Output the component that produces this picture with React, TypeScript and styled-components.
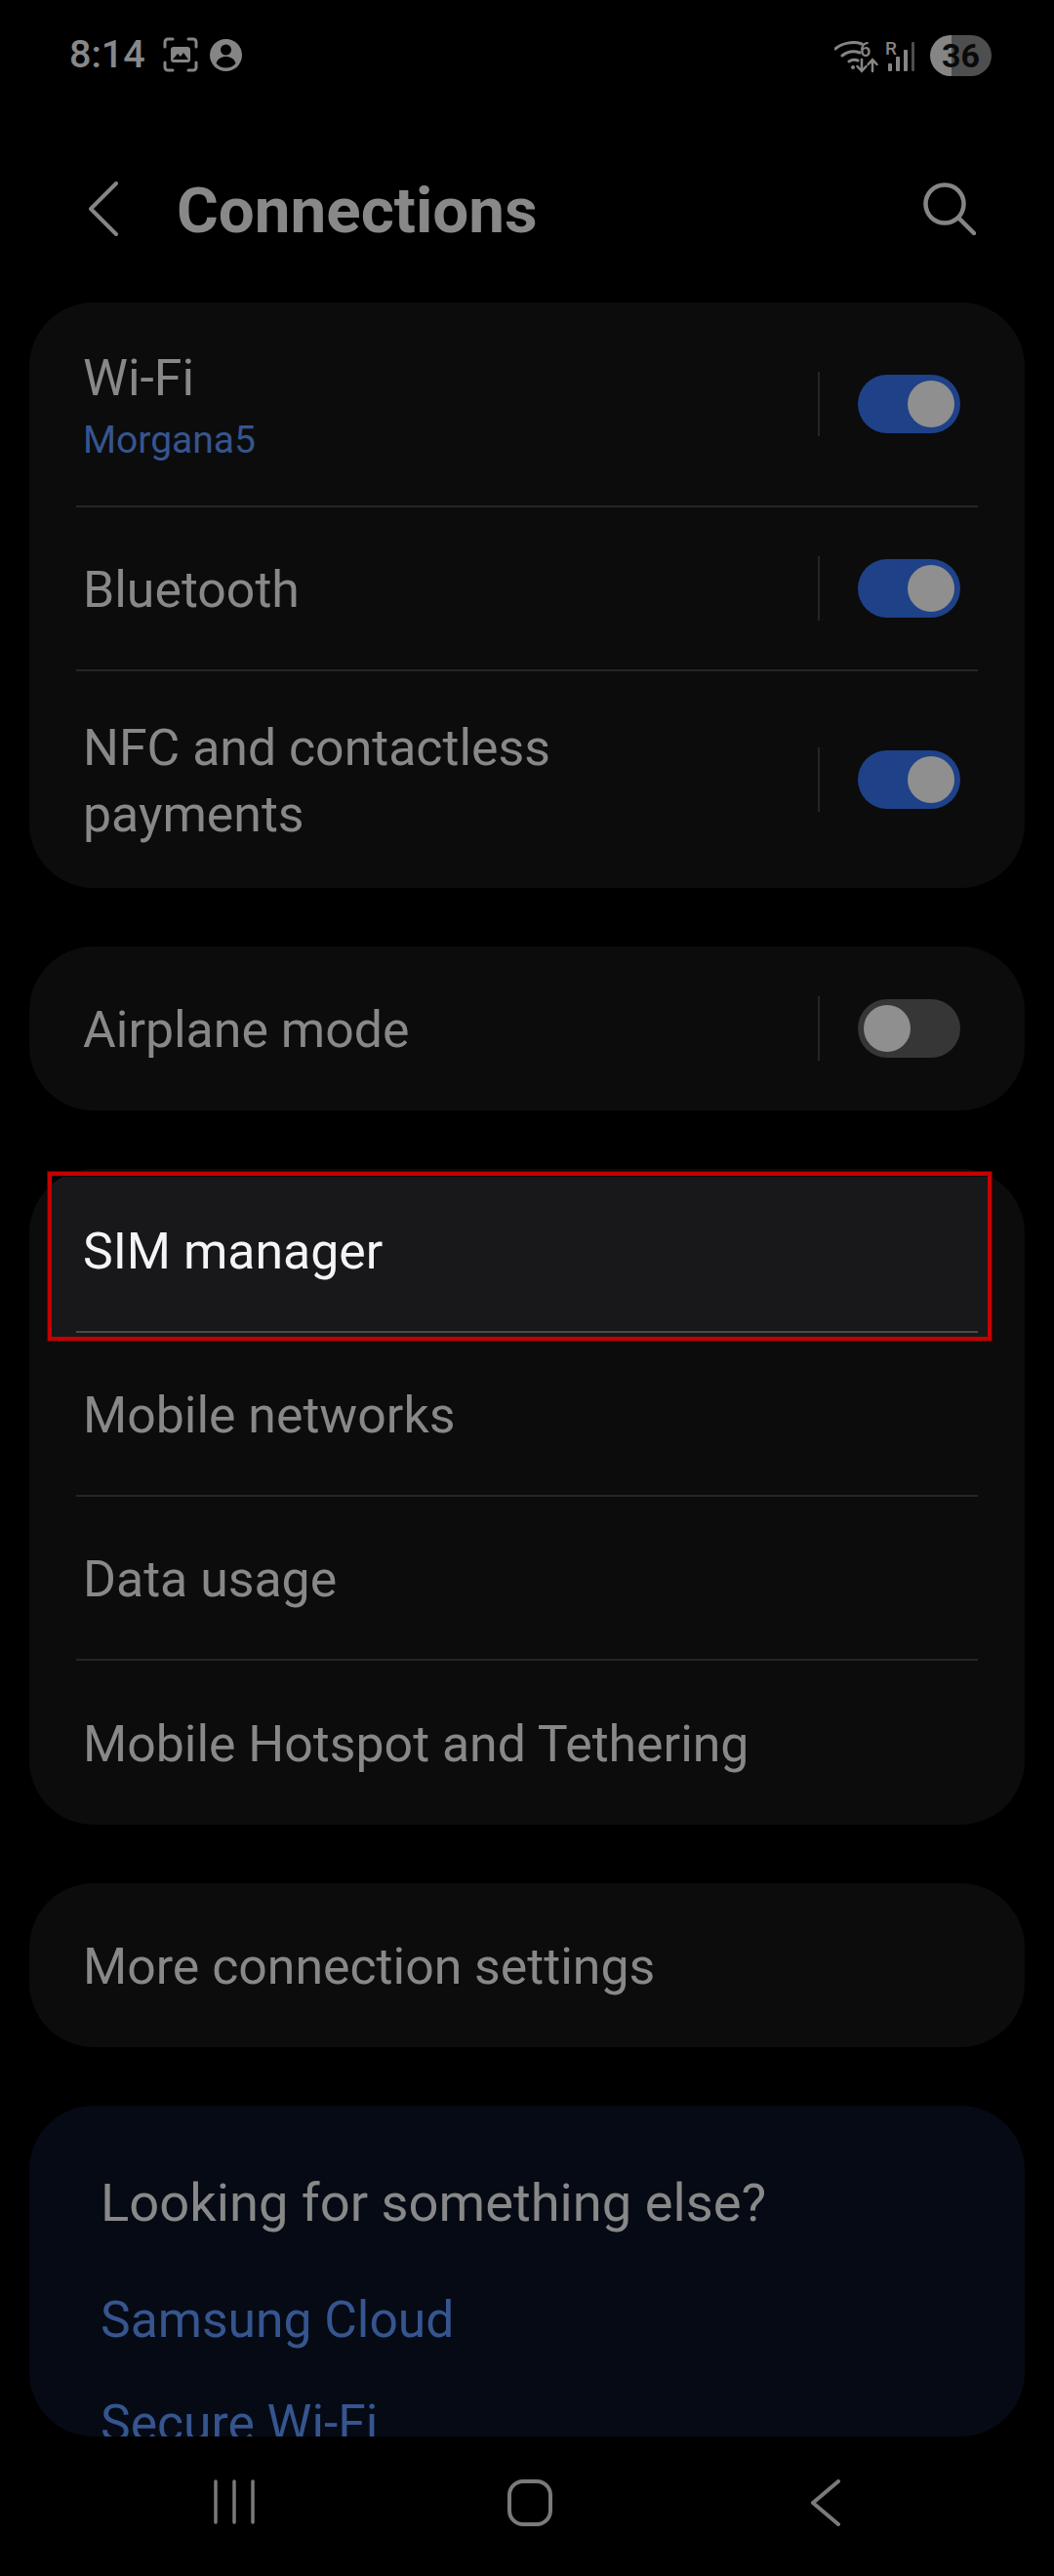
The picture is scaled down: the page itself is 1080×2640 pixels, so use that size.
import React from 'react';
import styled, { createGlobalStyle } from 'styled-components';

const GlobalStyle = createGlobalStyle`
  html, body {
    margin: 0;
    padding: 0;
    background: #000;
  }
  * {
    box-sizing: border-box;
  }
`;

const Page = styled.div`
  width: 1080px;
  height: 2640px;
  background: #000;
  display: flex;
  flex-direction: column;
  font-family: Roboto, "Liberation Sans", sans-serif;
  color: #888;
  overflow: hidden;
`;

const StatusBar = styled.div`
  height: 110px;
  padding: 36px 64px 0 71px;
  display: flex;
  align-items: flex-start;
`;

const Time = styled.span`
  font-size: 39.5px;
  line-height: 40px;
  font-weight: 500;
  margin-right: 6px;
`;

const StatusLeft = styled.div`
  display: flex;
  align-items: center;
  gap: 12px;
  flex: 1;
`;

const StatusRight = styled.div`
  display: flex;
  align-items: center;
  gap: 6px;
`;

const Battery = styled.div`
  width: 63px;
  height: 42px;
  margin-left: 6px;
  border-radius: 21px;
  background: linear-gradient(90deg, #858585 0 22px, #4e4e4e 22px);
  color: #0a0a0a;
  font-size: 34px;
  font-weight: 700;
  line-height: 42px;
  text-align: center;
`;

const Header = styled.div`
  height: 200px;
  padding: 8px 80px 0 91px;
  display: flex;
  align-items: center;
`;

const Title = styled.h1`
  flex: 1;
  margin: 2px 0 0 60px;
  font-size: 65.5px;
  font-weight: 700;
  color: #888;
`;

const Content = styled.div`
  flex: 1;
  padding: 0 30px;
  display: flex;
  flex-direction: column;
  gap: 60px;
  min-height: 0;
`;

const CardWrap = styled.div`
  position: relative;
`;

const Card = styled.div`
  background: #0c0c0c;
  border-radius: 66px;
  overflow: hidden;
  position: relative;
`;

const Row = styled.div<{ $height?: number; $bright?: boolean; $last?: boolean }>`
  height: ${(p) => p.$height || 168}px;
  margin: 0 48px;
  padding-left: 7px;
  display: flex;
  align-items: center;
  position: relative;
  z-index: 1;
  border-bottom: ${(p) => (p.$last ? 'none' : `2px solid ${p.$bright ? '#4a4a4a' : '#262626'}`)};
`;

const RowText = styled.div`
  flex: 1;
  padding-top: 3px;
`;

const Label = styled.div<{ $bright?: boolean }>`
  font-size: 51.8px;
  line-height: 68px;
  color: ${(p) => (p.$bright ? '#f4f4f6' : '#888')};
`;

const SubLabel = styled.div`
  font-size: 39px;
  line-height: 52px;
  margin-top: 3px;
  color: #36558f;
`;

const VDivider = styled.div`
  width: 2px;
  height: 66px;
  background: #262626;
  margin-right: 39px;
`;

const Toggle = styled.div<{ $on?: boolean }>`
  width: 105px;
  height: 60px;
  border-radius: 30px;
  background: ${(p) => (p.$on ? '#1e4188' : '#363636')};
  padding: 6px;
  display: flex;
  justify-content: ${(p) => (p.$on ? 'flex-end' : 'flex-start')};
  margin-right: 18px;
`;

const Thumb = styled.div`
  width: 48px;
  height: 48px;
  border-radius: 50%;
  background: #8f8f8f;
`;

const Highlight = styled.div`
  position: absolute;
  left: 23px;
  top: 8px;
  width: 959px;
  height: 164px;
  background: #18181b;
`;

const RedFrame = styled.div`
  position: absolute;
  left: 19px;
  top: 3px;
  width: 967px;
  height: 173px;
  border: 4px solid #c40000;
  box-shadow: 0 0 0 1px #5a0000;
  z-index: 2;
`;

const HelpCard = styled.div`
  height: 339px;
  overflow: hidden;
  background: #050a14;
  border-radius: 66px;
  padding: 62px 73px 0;
`;

const HelpTitle = styled.div`
  font-size: 54.3px;
  line-height: 76px;
  color: #888;
  margin-bottom: 29px;
`;

const HelpLink = styled.div`
  font-size: 51.6px;
  line-height: 106px;
  color: #36558f;
`;

const NavBar = styled.div`
  height: 143px;
  padding: 44px 0 0 88px;
  display: grid;
  grid-template-columns: repeat(3, 303px);
  justify-items: center;
  align-items: start;
  flex-shrink: 0;
`;

const ScreenshotIcon = () => (
  <svg width="36" height="36" viewBox="0 0 36 36" fill="none" stroke="#858585" strokeWidth="3" strokeLinecap="round">
    <path d="M2 10V5a3 3 0 0 1 3-3h5M26 2h5a3 3 0 0 1 3 3v5M34 26v5a3 3 0 0 1-3 3h-5M10 34H5a3 3 0 0 1-3-3v-5" />
    <rect x="8" y="10" width="20" height="16" rx="3" fill="#858585" stroke="none" />
    <path d="M10 23l5-6 3 3 3-4 5 7z" fill="#000" stroke="none" />
  </svg>
);

const ProfileIcon = () => (
  <svg width="33" height="33" viewBox="0 0 33 33">
    <circle cx="16.5" cy="16.5" r="16.5" fill="#858585" />
    <circle cx="16.5" cy="11" r="5.5" fill="#000" />
    <path d="M6.5 25c1.5-5 5.5-7 10-7s8.5 2 10 7c-2.5 3-6 4.500-10 4.500s-7.500-1.500-10-4.500z" fill="#000" />
  </svg>
);

const WifiIcon = () => (
  <svg width="46" height="36" viewBox="0 0 46 36" fill="none" stroke="#858585" strokeWidth="3" strokeLinecap="round">
    <path d="M1 11c7-6 18-8 27-5M8 18c5-4 12-5 18-3M15 24c3-2 6-2 9-1" />
    <circle cx="19" cy="30" r="2" fill="#858585" stroke="none" />
    <text x="26" y="19" fontSize="20" fontWeight="500" fill="#858585" stroke="none" fontFamily="Roboto, sans-serif">6</text>
    <path d="M28 22v12M23.500 29l4.500 5 4.500-5M39 34V23M34.500 27l4.500-5 4.500 5" strokeWidth="2.500" />
  </svg>
);

const SignalIcon = () => (
  <svg width="34" height="36" viewBox="0 0 34 36" fill="#858585">
    <text x="0" y="17" fontSize="19" fontWeight="500" fontFamily="Roboto, sans-serif">R</text>
    <rect x="3" y="26" width="4" height="8" rx="1" />
    <rect x="11" y="19" width="4" height="15" rx="1" />
    <rect x="19" y="12" width="4" height="22" rx="1" />
    <rect x="27" y="4" width="3" height="30" rx="1" fill="#4e4e4e" />
  </svg>
);

const BackIcon = () => (
  <svg width="30" height="56" viewBox="0 0 30 56" fill="none" stroke="#858585" strokeWidth="4" strokeLinecap="round" strokeLinejoin="round">
    <path d="M28 2L2 28l26 26" />
  </svg>
);

const SearchIcon = () => (
  <svg width="54" height="54" viewBox="0 0 54 54" fill="none" stroke="#858585" strokeWidth="4.500" strokeLinecap="round">
    <circle cx="22" cy="22" r="19.500" />
    <path d="M37 37l15 15" />
  </svg>
);

const RecentsIcon = () => (
  <svg width="44" height="46" viewBox="0 0 44 46" fill="none" stroke="#7a7a7a" strokeWidth="3.500" strokeLinecap="round">
    <path d="M3 2v42M22 2v42M41 2v42" />
  </svg>
);

const HomeIcon = () => (
  <svg width="46" height="48" viewBox="0 0 46 48" fill="none" stroke="#7a7a7a" strokeWidth="4">
    <rect x="2" y="2" width="42" height="44" rx="14" />
  </svg>
);

const NavBackIcon = () => (
  <svg width="32" height="48" viewBox="0 0 32 48" fill="none" stroke="#7a7a7a" strokeWidth="4" strokeLinecap="round" strokeLinejoin="round">
    <path d="M29 2L3 24l26 22" />
  </svg>
);

const ToggleControl = ({ on }: { on?: boolean }) => (
  <>
    <VDivider />
    <Toggle $on={on}>
      <Thumb />
    </Toggle>
  </>
);

const App = () => (
  <Page>
    <GlobalStyle />
    <StatusBar>
      <StatusLeft>
        <Time>8:14</Time>
        <ScreenshotIcon />
        <ProfileIcon />
      </StatusLeft>
      <StatusRight>
        <WifiIcon />
        <SignalIcon />
        <Battery>36</Battery>
      </StatusRight>
    </StatusBar>
    <Header>
      <BackIcon />
      <Title>Connections</Title>
      <SearchIcon />
    </Header>
    <Content>
      <Card>
        <Row $height={210}>
          <RowText>
            <Label>Wi-Fi</Label>
            <SubLabel>Morgana5</SubLabel>
          </RowText>
          <ToggleControl on />
        </Row>
        <Row>
          <RowText>
            <Label>Bluetooth</Label>
          </RowText>
          <ToggleControl on />
        </Row>
        <Row $height={222} $last>
          <RowText>
            <Label>NFC and contactless</Label>
            <Label>payments</Label>
          </RowText>
          <ToggleControl on />
        </Row>
      </Card>
      <Card>
        <Row $last>
          <RowText>
            <Label>Airplane mode</Label>
          </RowText>
          <ToggleControl />
        </Row>
      </Card>
      <CardWrap>
        <Card>
          <Highlight />
          <Row $bright>
            <RowText>
              <Label $bright>SIM manager</Label>
            </RowText>
          </Row>
          <Row>
            <RowText>
              <Label>Mobile networks</Label>
            </RowText>
          </Row>
          <Row>
            <RowText>
              <Label>Data usage</Label>
            </RowText>
          </Row>
          <Row $last>
            <RowText>
              <Label>Mobile Hotspot and Tethering</Label>
            </RowText>
          </Row>
        </Card>
        <RedFrame />
      </CardWrap>
      <Card>
        <Row $last>
          <RowText>
            <Label>More connection settings</Label>
          </RowText>
        </Row>
      </Card>
      <HelpCard>
        <HelpTitle>Looking for something else?</HelpTitle>
        <HelpLink>Samsung Cloud</HelpLink>
        <HelpLink>Secure Wi-Fi</HelpLink>
      </HelpCard>
    </Content>
    <NavBar>
      <RecentsIcon />
      <HomeIcon />
      <NavBackIcon />
    </NavBar>
  </Page>
);

export default App;
